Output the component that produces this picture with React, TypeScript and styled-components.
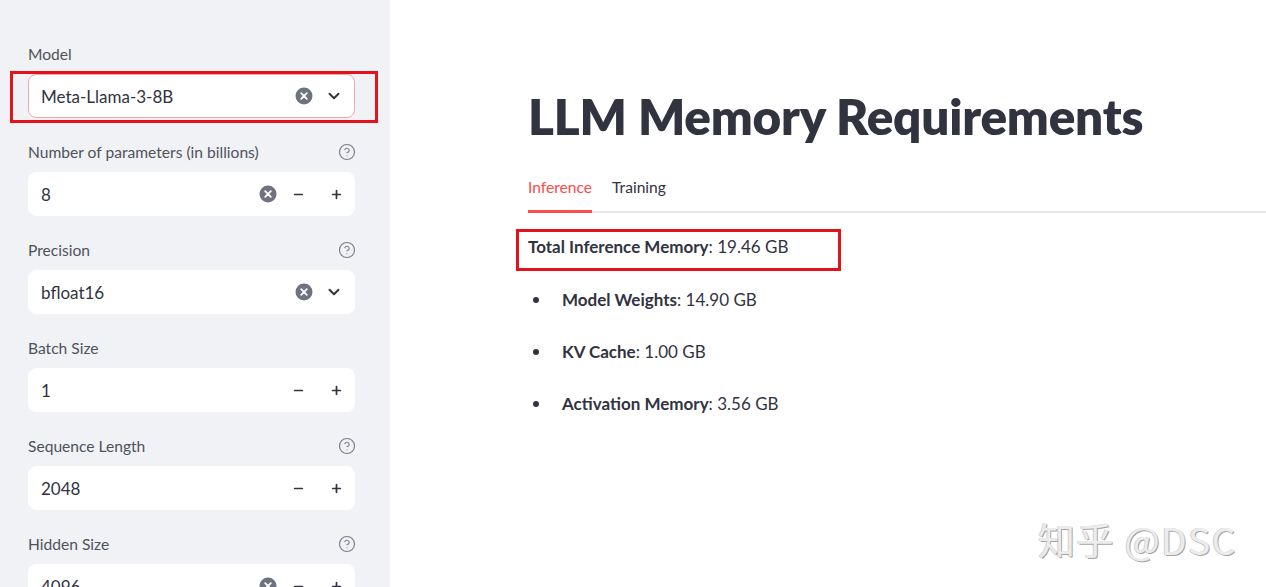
import React from 'react';
import styled, { createGlobalStyle } from 'styled-components';
import { ChevronDown, Minus, Plus, CircleHelp } from 'lucide-react';

const Global = createGlobalStyle`
  html, body { margin: 0; padding: 0; background: #fff; }
  body { font-family: Lato, "Noto Sans", sans-serif; color: #31333f; }
  * { box-sizing: border-box; }
`;

const Page = styled.div`
  position: relative;
  display: flex;
  width: 1266px;
  height: 587px;
  overflow: hidden;
`;

const Sidebar = styled.aside`
  width: 390px;
  flex: none;
  background: #f0f2f6;
  padding: 42px 35px 0 28px;
  display: flex;
  flex-direction: column;
  gap: 22px;
`;

const Field = styled.div`
  display: flex;
  flex-direction: column;
  gap: 8px;
`;

const LabelRow = styled.div`
  height: 24px;
  display: flex;
  align-items: center;
  justify-content: space-between;
  font-size: 15.6px;
  color: #4f525c;
`;

const Help = styled.span`
  display: flex;
  width: 20px;
  justify-content: center;
  margin-right: -2px;
  color: #7c7f8c;
`;

const Box = styled.div<{ $focused?: boolean }>`
  position: relative;
  height: 44px;
  background: #fff;
  border-radius: 8px;
  border: 1px solid ${p => (p.$focused ? '#f4a6a6' : '#fff')};
  display: flex;
  align-items: center;
  padding-left: 12px;
  font-size: 17px;
  color: #31333f;
`;

const Annot = styled.div`
  position: absolute;
  left: -19px;
  top: -4px;
  width: 368px;
  height: 52px;
  border: 3px solid #e4121a;
  pointer-events: none;
`;

const Value = styled.span`
  flex: 1;
`;

const Clear = styled.span`
  display: flex;
  width: 20px;
  justify-content: center;
`;

const Chevron = styled.span`
  display: flex;
  width: 40px;
  justify-content: center;
  color: #31333f;
`;

const StepBtn = styled.span<{ $w: number }>`
  display: flex;
  width: ${p => p.$w}px;
  justify-content: center;
  color: #31333f;
`;

const Main = styled.main`
  flex: 1;
  padding: 85px 0 0 138px;
  display: flex;
  flex-direction: column;
`;

const Title = styled.h1`
  margin: 0;
  font-size: 49.4px;
  line-height: 62px;
  font-weight: 800;
  color: #31333f;
  letter-spacing: -0.2px;
`;

const Tabs = styled.div`
  margin-top: 30px;
  display: flex;
  gap: 20px;
  border-bottom: 2px solid #e6e8ec;
`;

const Tab = styled.div<{ $active?: boolean }>`
  font-size: 15.6px;
  line-height: 20px;
  padding-bottom: 13px;
  color: ${p => (p.$active ? '#ff4b4b' : '#31333f')};
  border-bottom: 3px solid ${p => (p.$active ? '#ff4b4b' : 'transparent')};
  margin-bottom: -2px;
`;

const TotalWrap = styled.div`
  position: relative;
  margin-top: 22px;
  font-size: 17px;
  line-height: 24px;
  align-self: flex-start;
`;

const TotalAnnot = styled.div`
  position: absolute;
  left: -12px;
  top: -6px;
  width: 325px;
  height: 42px;
  border: 3px solid #e4121a;
  pointer-events: none;
`;

const List = styled.ul`
  margin: 29px 0 0;
  padding: 0;
  list-style: none;
  display: flex;
  flex-direction: column;
  gap: 28px;
`;

const Item = styled.li`
  display: flex;
  align-items: center;
  font-size: 17px;
  line-height: 24px;
  &::before {
    content: '';
    width: 6px;
    height: 6px;
    border-radius: 50%;
    background: #31333f;
    margin: 0 23px 0 5px;
  }
`;

const Watermark = styled.div`
  position: absolute;
  left: 1038px;
  top: 512px;
  font-family: "Noto Sans CJK SC", "Noto Sans", sans-serif;
  font-size: 37px;
  color: #ececec;
  text-shadow: 1px 1px 0 #a5a5a5, -1px 0 0 #d0d0d0;
  letter-spacing: 1.5px;
  white-space: nowrap;
`;

const ClearIcon = () => (
  <svg width="18" height="18" viewBox="0 0 18 18">
    <circle cx="9" cy="9" r="8.5" fill="#6f7280" />
    <path d="M6.2 6.2 L11.8 11.8 M11.8 6.2 L6.2 11.8" stroke="#fff" strokeWidth="1.8" strokeLinecap="round" />
  </svg>
);

type NumProps = { label: string; value: string; help?: boolean; clear?: boolean };

const NumberField = ({ label, value, help, clear }: NumProps) => (
  <Field>
    <LabelRow>
      <span>{label}</span>
      {help && (
        <Help>
          <CircleHelp size={18} strokeWidth={1.6} />
        </Help>
      )}
    </LabelRow>
    <Box>
      <Value>{value}</Value>
      {clear && (
        <Clear>
          <ClearIcon />
        </Clear>
      )}
      <StepBtn $w={40}>
        <Minus size={13} strokeWidth={3.2} />
      </StepBtn>
      <StepBtn $w={36}>
        <Plus size={13} strokeWidth={3.2} />
      </StepBtn>
    </Box>
  </Field>
);

type SelProps = { label: string; value: string; help?: boolean; focused?: boolean };

const SelectField = ({ label, value, help, focused }: SelProps) => (
  <Field>
    <LabelRow>
      <span>{label}</span>
      {help && (
        <Help>
          <CircleHelp size={18} strokeWidth={1.6} />
        </Help>
      )}
    </LabelRow>
    <Box $focused={focused}>
      <Value>{value}</Value>
      <Clear>
        <ClearIcon />
      </Clear>
      <Chevron>
        <ChevronDown size={18} strokeWidth={2.6} />
      </Chevron>
      {focused && <Annot />}
    </Box>
  </Field>
);

export default function App() {
  return (
    <Page>
      <Global />
      <Sidebar>
        <SelectField label="Model" value="Meta-Llama-3-8B" focused />
        <NumberField label="Number of parameters (in billions)" value="8" help clear />
        <SelectField label="Precision" value="bfloat16" help />
        <NumberField label="Batch Size" value="1" />
        <NumberField label="Sequence Length" value="2048" help />
        <NumberField label="Hidden Size" value="4096" help clear />
      </Sidebar>
      <Main>
        <Title>LLM Memory Requirements</Title>
        <Tabs>
          <Tab $active>Inference</Tab>
          <Tab>Training</Tab>
        </Tabs>
        <TotalWrap>
          <b>Total Inference Memory</b>: 19.46 GB
          <TotalAnnot />
        </TotalWrap>
        <List>
          <Item>
            <span>
              <b>Model Weights</b>: 14.90 GB
            </span>
          </Item>
          <Item>
            <span>
              <b>KV Cache</b>: 1.00 GB
            </span>
          </Item>
          <Item>
            <span>
              <b>Activation Memory</b>: 3.56 GB
            </span>
          </Item>
        </List>
      </Main>
      <Watermark>知乎 @DSC</Watermark>
    </Page>
  );
}
